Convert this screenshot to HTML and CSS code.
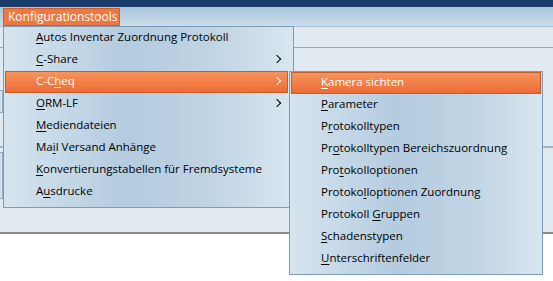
FILE: index.html
```html
<!DOCTYPE html>
<html>
<head>
	<meta http-equiv="Content-Type" content="text/html; charset=UTF-8">
	<title>Konfigurationstools</title>
	<link rel="stylesheet" href="styles.css">
</head>
<body>

<div class="titlebar"></div>
<div class="menubar">
	<span class="topitem">Konfigurationstools</span>
</div>
<div class="toolbar"></div>
<div class="content">
	<div class="leftbox one"></div>
	<div class="panel">
		<div class="leftbox two"></div>
	</div>
</div>
<div class="page"></div>

<ul class="menu main">
	<li><u>A</u>utos Inventar Zuordnung Protokoll</li>
	<li class="sub"><u>C</u>-Share</li>
	<li class="sub active">C-C<u>h</u>eq</li>
	<li class="sub"><u>O</u>RM-LF</li>
	<li><u>M</u>ediendateien</li>
	<li>Ma<u>i</u>l Versand Anhänge</li>
	<li><u>K</u>onvertierungstabellen für Fremdsysteme</li>
	<li>A<u>u</u>sdrucke</li>
</ul>

<ul class="menu second">
	<li class="active"><u>K</u>amera sichten</li>
	<li><u>P</u>arameter</li>
	<li>P<u>r</u>otokolltypen</li>
	<li>Pr<u>o</u>tokolltypen Bereichszuordnung</li>
	<li>Pro<u>t</u>okolloptionen</li>
	<li>Protoko<u>l</u>loptionen Zuordnung</li>
	<li>Protokoll <u>G</u>ruppen</li>
	<li><u>S</u>chadenstypen</li>
	<li><u>U</u>nterschriftenfelder</li>
</ul>

</body>
</html>
```

FILE: styles.css
```css
html, body { margin: 0; padding: 0; }
body { width: 553px; height: 281px; overflow: hidden; position: relative; background: #fff; }
body { font-family: "Open Sans", "Noto Sans", sans-serif; font-size: 11.5px; color: #000; }

.titlebar { height: 7px; background: #1c3e6d; }
.menubar { padding: 1px 0 0 3px; box-sizing: border-box; background: linear-gradient(#aac6db, #cbdce9); border-bottom: 1px solid #a8c1d5; height: 20px; }
.topitem { display: inline-block; height: 18px; line-height: 15px; padding: 0 4px; box-sizing: border-box; width: 117px; color: #fff; background: #ef7741; border: 1px solid #cf5f2d; font-size: 12px; }
.toolbar { height: 20px; background: #e1e9f1; border-bottom: 1px solid #8fa9c1; }
.content { background: #e1e9f1; border-bottom: 2px solid #8a8a8a; padding-top: 42px; box-sizing: border-box; height: 186px; }
.panel { border-top: 2px solid #9db8cd; margin-top: 33px; padding-top: 4px; }
.leftbox { width: 2px; border: 1px solid #8eabc3; border-left: 0; background: #d2e1ec; }
.leftbox.one { height: 21px; }
.leftbox.two { height: 45px; }
.page { height: 47px; background: #fff; }

.menu { position: absolute; margin: 0; padding: 0 0 4px; list-style: none; box-sizing: border-box; }
.menu { border: 1px solid #7d9cb8; background: linear-gradient(90deg, #d6e4ee 0%, #b4cce0 42%, #bfd3e3 70%, #d8e6ef 100%); }
.menu li { position: relative; height: 22px; line-height: 18px; box-sizing: border-box; border: 1px solid transparent; }
.menu u { text-decoration-thickness: 1px; text-underline-offset: 2px; }
.menu li.active { background: linear-gradient(#f8935c, #ed6c36); border-color: #c95a2a; color: #fff; }
.menu li.sub::after { content: ""; position: absolute; right: 7px; top: 6px; width: 5px; height: 5px; border-right: 1.5px solid #000; border-top: 1.5px solid #000; transform: rotate(45deg); }
.menu li.sub.active::after { border-color: #fff; }

.main { left: 3px; top: 26px; width: 291px; height: 182px; }
.main li { margin: 0 5px 0 1px; padding-left: 30px; }
.second { left: 289px; top: 71px; width: 254px; height: 204px; }
.second li { margin: 0 1px; padding-left: 29px; }
```
